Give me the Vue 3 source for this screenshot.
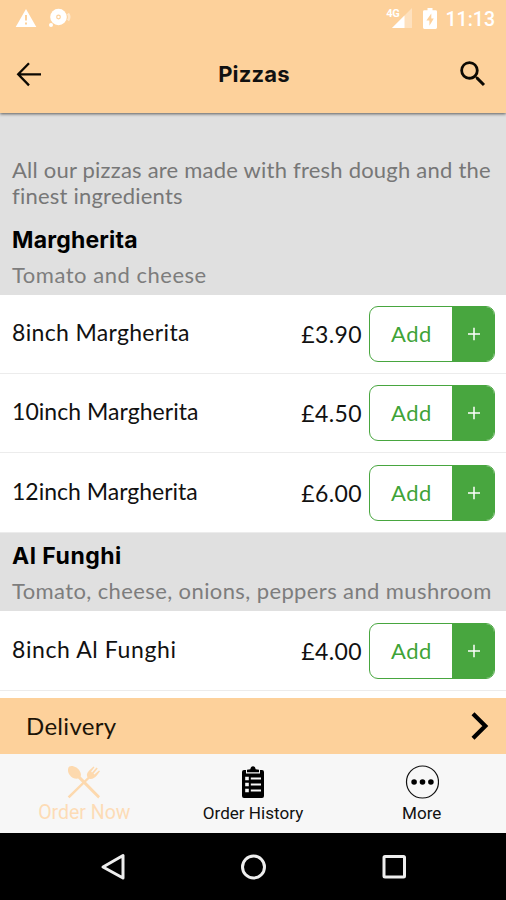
<script setup>
const sections = [
  {
    title: 'Margherita',
    description: 'Tomato and cheese',
    titleTracking: 0.2,
    tracking: 0.52,
    items: [
      { name: '8inch Margherita', price: '£3.90', tracking: 0.33 },
      { name: '10inch Margherita', price: '£4.50', tracking: 0.04 },
      { name: '12inch Margherita', price: '£6.00', tracking: 0 }
    ]
  },
  {
    title: 'Al Funghi',
    description: 'Tomato, cheese, onions, peppers and mushroom',
    titleTracking: 0.5,
    tracking: 0.39,
    items: [{ name: '8inch Al Funghi', price: '£4.00', tracking: 0.6 }]
  }
]
const px = (n) => ({ letterSpacing: n + 'px' })
</script>

<template>
  <div class="screen">
    <header class="header">
      <div class="status">
        <svg class="warn" width="22" height="20" viewBox="0 0 22 20">
          <path d="M11 1 21.3 19H.7Z" fill="#fff" />
          <path d="M11 7v5.6M11 14.4v2.2" stroke="#fdd19b" stroke-width="2" />
        </svg>
        <svg class="disc" width="24" height="20" viewBox="0 0 24 20">
          <circle cx="10.5" cy="9" r="8.3" fill="#fff" />
          <circle cx="10.5" cy="9" r="1.8" fill="none" stroke="#fdd19b" stroke-width="1.2" />
          <circle cx="3" cy="17" r="2" fill="#fff" />
          <path d="M20 5.5q2.5 3.5 0 7" fill="none" stroke="#fff" stroke-opacity=".5" stroke-width="2.5" />
        </svg>
        <span class="spacer"></span>
        <span class="net">4G</span>
        <svg class="signal" width="20" height="20" viewBox="0 0 20 20">
          <path d="M20 0V20H0Z" fill="#fff" fill-opacity=".35" />
          <path d="M12.5 7.5V20H0Z" fill="#fff" />
        </svg>
        <svg class="battery" width="14" height="21" viewBox="0 0 14 21">
          <path d="M4.5 0h5v2.2H12.6Q14 2.2 14 3.6V19.6Q14 21 12.6 21H1.4Q0 21 0 19.6V3.6Q0 2.2 1.4 2.2H4.5Z" fill="#fff" />
          <path d="M8.3 5.5 3.4 12.6H6.4V17.8L10.8 10.6H8.3Z" fill="#fdd19b" />
        </svg>
        <span class="time">11:13</span>
      </div>
      <div class="toolbar">
        <svg class="back" width="26" height="26" viewBox="0 0 26 26">
          <path d="M25 13.3H2.2M13 2.2 2.2 13.3 13 24.4" fill="none" stroke="#0c0903" stroke-width="2.3" />
        </svg>
        <h1>Pizzas</h1>
        <svg class="search" width="34" height="34" viewBox="0 0 24 24">
          <path fill="#0c0903" d="M15.5 14h-.79l-.28-.27A6.47 6.47 0 0 0 16 9.5 6.5 6.5 0 1 0 9.5 16c1.61 0 3.09-.59 4.23-1.57l.27.28v.79l5 4.99L20.49 19l-4.99-5zm-6 0C7.01 14 5 11.99 5 9.5S7.01 5 9.5 5 14 7.01 14 9.5 11.99 14 9.5 14z" />
        </svg>
      </div>
    </header>

    <main class="menu">
      <p class="intro">All our pizzas are made with fresh dough and the finest ingredients</p>
      <section v-for="s in sections" :key="s.title">
        <div class="section-head">
          <h2 :style="px(s.titleTracking)">{{ s.title }}</h2>
          <p :style="px(s.tracking)">{{ s.description }}</p>
        </div>
        <div v-for="i in s.items" :key="i.name" class="row">
          <span class="name" :style="px(i.tracking)">{{ i.name }}</span>
          <span class="price">{{ i.price }}</span>
          <button class="add">
            <span class="label">Add</span>
            <span class="plus">
              <svg width="12" height="14" viewBox="0 0 12 14"><path d="M6 .8V13.2M0 7H12" stroke="#fff" stroke-width="1.5" /></svg>
            </span>
          </button>
        </div>
      </section>
    </main>

    <div class="delivery">
      <span>Delivery</span>
      <svg width="18" height="28" viewBox="0 0 18 28"><path d="M2 1.8 14.3 14 2 26.2" fill="none" stroke="#000" stroke-width="4.2" /></svg>
    </div>

    <nav class="tabs">
      <div class="tab active">
        <svg width="34" height="34" viewBox="0 0 34 34" fill="#fdd9ae">
          <path d="M1.2 3.2C1.8.4 6 .2 9.4 2.6c3.5 2.5 5.4 6.3 4.2 9L33 31.2 31.2 33.4 11.2 13.6C7.4 14 4.5 12.8 2.5 9.8 1 7.6.7 5.3 1.2 3.2Z" />
          <path d="M20.6 12.2C19 9.5 20.4 7.2 22.8 5L26.5 1.5 27.5 2.3 24.2 6.6 25 7.4 29.5 2.5 30.7 3.5 26.5 8.7 27.3 9.5 32 5.4 33 6.3 29.8 10.6C27.4 13.3 24.6 14.7 22.3 13.7L2.5 33.2.7 31.6Z" />
        </svg>
        <span>Order Now</span>
      </div>
      <div class="tab">
        <svg class="clipboard" width="22" height="32" viewBox="0 0 22 32">
          <path d="M2 4H4V7.4H18V4H20Q22 4 22 6V30Q22 32 20 32H2Q0 32 0 30V6Q0 4 2 4Z" />
          <path d="M5 6.2V3.8L8.3 3.2Q8.8 .3 11 .3T13.7 3.2L17 3.8V6.2Z" />
          <path d="M3.2 12.5H6.8M3.2 18.5H6.8M3.2 24.5H6.8" stroke="#f7f7f7" stroke-width="3.5" />
          <path d="M8.8 12.5H19M8.8 18.5H19M8.8 24.5H19" stroke="#f7f7f7" stroke-width="2" />
        </svg>
        <span>Order History</span>
      </div>
      <div class="tab">
        <svg width="34" height="34" viewBox="0 0 34 34">
          <circle cx="17.5" cy="17" r="16" fill="none" stroke="#111" stroke-width="1.2" />
          <circle cx="9.1" cy="17" r="2.8" /><circle cx="17.5" cy="17" r="2.8" /><circle cx="25.9" cy="17" r="2.8" />
        </svg>
        <span>More</span>
      </div>
    </nav>

    <footer class="system">
      <svg width="28" height="28" viewBox="0 0 28 28"><path d="M24 2.5V25L4 14Z" /></svg>
      <svg width="28" height="28" viewBox="0 0 28 28"><circle cx="14.5" cy="14" r="11" /></svg>
      <svg width="28" height="28" viewBox="0 0 28 28"><rect x="4" y="3.5" width="20.5" height="20.5" rx="1" /></svg>
    </footer>
  </div>
</template>

<style>
body { margin: 0; background: #fff; }
</style>

<style scoped>
.screen {
  width: 506px;
  height: 900px;
  display: flex;
  flex-direction: column;
  overflow: hidden;
  background: #fff;
  color: #111;
  font-family: Lato, "Liberation Sans", sans-serif;
}
svg { display: block; flex: none; }
h1, h2, p { margin: 0; }
.header {
  flex: none;
  height: 113px;
  background: #fdd19b;
  box-shadow: 0 1px 3px rgba(0, 0, 0, .6);
  z-index: 1;
}
.status {
  display: flex;
  align-items: center;
  height: 36px;
  padding: 0 11px 0 15px;
  color: #fff;
  font-family: Roboto, sans-serif;
}
.disc { margin-left: 11px; }
.spacer { flex: 1; }
.net { align-self: flex-start; margin-top: 7px; font-size: 11px; line-height: 14px; font-weight: 700; letter-spacing: -.3px; }
.signal { margin-left: -8px; }
.battery { margin-left: 11px; }
.time { margin-left: 9px; font-size: 19.5px; font-weight: 500; line-height: 24px; padding-top: 3px; }
.toolbar {
  display: flex;
  align-items: center;
  height: 76px;
  padding: 0 16px;
}
.toolbar h1 {
  flex: 1;
  text-align: center;
  font: 700 22px/26px Inter, sans-serif;
  letter-spacing: .2px;
  padding-left: 10px;
}
.menu {
  flex: none;
  height: 585px;
  overflow: hidden;
  background: #fff;
}
.intro {
  background: #e0e0e0;
  padding: 44px 10px 7px 12px;
  font-size: 22px;
  line-height: 26px;
  letter-spacing: .22px;
  color: #777;
}
.section-head {
  height: 78.8px;
  box-sizing: border-box;
  padding: 10.6px 0 0 12px;
  background: #e0e0e0;
  white-space: nowrap;
}
.section-head h2 { color: #000; font: 700 23px/26px Inter, sans-serif; }
.section-head p { margin-top: 9px; font-size: 22px; line-height: 26px; color: #7d7d7d; }
.row {
  display: flex;
  align-items: center;
  height: 79.3px;
  box-sizing: border-box;
  padding: 0 11px 0 12px;
  border-bottom: 1px solid #ececec;
  font-size: 23px;
  line-height: 28px;
}
.name { flex: 1; padding-bottom: 4px; }
.price { letter-spacing: .4px; margin-right: 7px; }
.add {
  display: flex;
  width: 126px;
  height: 56px;
  padding: 0;
  border: 1px solid #48a63f;
  border-radius: 9px;
  overflow: hidden;
  background: #fff;
  color: #3fa337;
  font: 400 22px/28px Lato, sans-serif;
  letter-spacing: .5px;
}
.label { flex: 1; display: flex; align-items: center; justify-content: center; padding-left: 1px; }
.plus {
  width: 41px;
  padding-left: 1px;
  display: flex;
  align-items: center;
  justify-content: center;
  background: #48a63f;
}
.delivery {
  flex: none;
  display: flex;
  align-items: center;
  justify-content: space-between;
  height: 56px;
  padding: 0 17px 0 26px;
  box-sizing: border-box;
  background: #fdd19b;
  color: #1c1408;
  font-size: 24px;
  letter-spacing: .3px;
}
.delivery span { padding-bottom: 2px; }
.tabs {
  flex: none;
  display: grid;
  grid-template-columns: repeat(3, 1fr);
  height: 79px;
  background: #f7f7f7;
  font-family: Roboto, sans-serif;
}
.tab {
  display: flex;
  flex-direction: column;
  align-items: center;
  justify-content: space-between;
  padding: 11px 0 8px;
  font-size: 17.1px;
  line-height: 24px;
}
.clipboard { margin-top: 1px; }
.active { color: #fddcb6; font-size: 19.5px; }
.system {
  flex: 1;
  display: flex;
  align-items: center;
  justify-content: center;
  gap: 112.5px;
  background: #000;
}
.system svg { fill: none; stroke: #eee; stroke-width: 3; stroke-linejoin: round; }
</style>
